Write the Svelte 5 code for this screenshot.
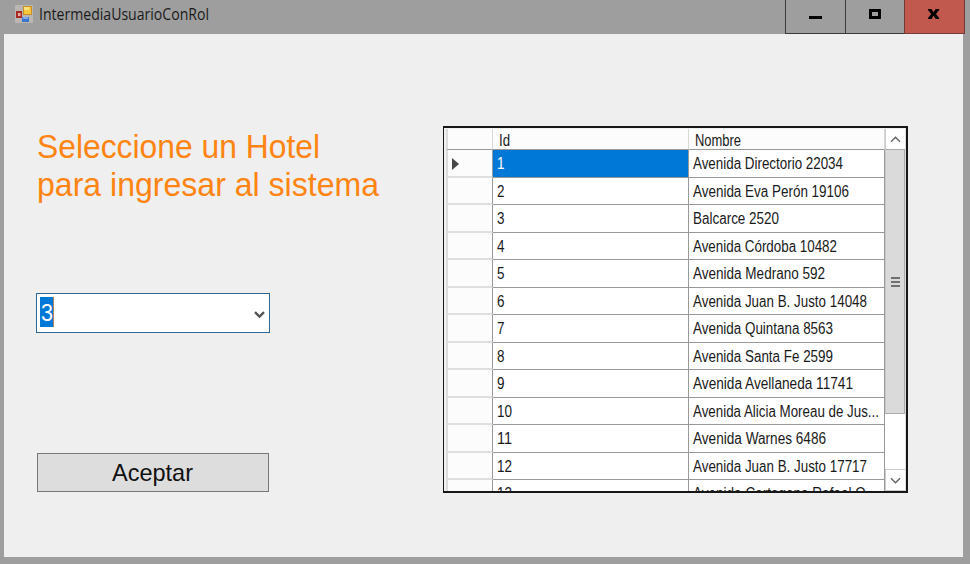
<script>
  const rows = [
    ['1', 'Avenida Directorio 22034', 150],
    ['2', 'Avenida Eva Perón 19106', 156],
    ['3', 'Balcarce 2520', 86],
    ['4', 'Avenida Córdoba 10482', 144],
    ['5', 'Avenida Medrano 592', 132],
    ['6', 'Avenida Juan B. Justo 14048', 174],
    ['7', 'Avenida Quintana 8563', 140],
    ['8', 'Avenida Santa Fe 2599', 140],
    ['9', 'Avenida Avellaneda 11741', 160],
    ['10', 'Avenida Alicia Moreau de Jus...', 186],
    ['11', 'Avenida Warnes 6486', 133],
    ['12', 'Avenida Juan B. Justo 17717', 174],
    ['13', 'Avenida Cartagena Rafael O...', 184]
  ];
</script>

{#snippet label(text, width, x, y, size)}
  <svg class="label" width="100%" height="100%">
    <text {x} {y} font-size={size} textLength={width} lengthAdjust="spacingAndGlyphs">{text}</text>
  </svg>
{/snippet}

<div class="window">
  <header>
    <svg class="logo" width="18" height="18" viewBox="0 0 18 18">
      <rect width="18" height="18" fill="#b9b6b4" />
      <rect x="8" y="1" width="9" height="9" fill="#c98a28" />
      <rect x="9" y="2" width="7" height="7" fill="#f5c83a" />
      <rect x="9" y="2" width="5" height="3" fill="#fbe27c" />
      <rect x="1" y="6" width="6" height="7" fill="#a82a24" />
      <rect x="3" y="8" width="2.5" height="3" fill="#eda8a0" />
      <rect x="7" y="12" width="7" height="5" fill="#3c74cc" />
      <rect x="8" y="12" width="5" height="2" fill="#7caaf0" />
    </svg>
    <div class="title">{@render label('IntermediaUsuarioConRol', 170, 0, 20, 15.5)}</div>
    <div class="controls">
      <div class="ctl min"><svg width="59" height="33"><rect x="23" y="16" width="13" height="3" /></svg></div>
      <div class="ctl max"><svg width="58" height="33"><path d="M23 9h12v10H23zM26 12v4h6v-4z" fill-rule="evenodd" /></svg></div>
      <div class="ctl close"><svg width="59" height="33"><path d="M23 9h3.500l2.100 3.200L30.700 9h3.500v1l-3.200 4 3.200 4v1h-3.500l-2.100-3.200L26.500 19H23v-1l3.200-4L23 10z" /></svg></div>
    </div>
  </header>

  <main>
    <section class="form">
      <div class="heading">
        <div>{@render label('Seleccione un Hotel', 283, 0, 29, 33)}</div>
        <div>{@render label('para ingresar al sistema', 342, 0, 29, 33)}</div>
      </div>
      <div class="combo">
        <span class="selected">{@render label('3', 12, 1, 24, 24)}</span>
        <svg class="chevron" width="11" height="8" viewBox="0 0 11 8"><path d="M1 1.200l4.500 4.300L10 1.200" /></svg>
      </div>
      <div class="button">{@render label('Aceptar', 81, 74, 27, 24)}</div>
    </section>

    <div class="grid">
      <div class="table">
        <div class="row head">
          <div class="mark"></div>
          <div class="id">{@render label('Id', 11, 6, 16.500, 16)}</div>
          <div class="name">{@render label('Nombre', 46, 6, 16.500, 16)}</div>
        </div>
        {#each rows as [id, name, width], i}
          <div class="row" class:current={i === 0}>
            <div class="mark">
              {#if i === 0}<svg width="8" height="12"><path d="M0 0l7 6-7 6z" fill="#484848" /></svg>{/if}
            </div>
            <div class="id">{@render label(id, id.length === 1 ? 7.5 : 15, 4, 19, 16)}</div>
            <div class="name">{@render label(name, width, 4, 19, 16)}</div>
          </div>
        {/each}
      </div>
      <div class="scroll">
        <div class="arrow up"><svg width="11" height="7" viewBox="0 0 11 7"><path d="M1 5.700L5.500 1.200 10 5.700" /></svg></div>
        <div class="thumb"><i></i><i></i><i></i></div>
        <div class="arrow down"><svg width="11" height="7" viewBox="0 0 11 7"><path d="M1 1.200l4.500 4.500L10 1.200" /></svg></div>
      </div>
    </div>
  </main>
</div>

<style>
  .window {
    box-sizing: border-box;
    width: 970px;
    height: 564px;
    padding: 0 6px 7px 4px;
    background: #9e9e9e;
    font-family: "Liberation Sans", Arial, sans-serif;
    color: #1a1a1a;
    overflow: hidden;
    display: flex;
    flex-direction: column;
  }
  svg { display: block; }
  .label { fill: currentColor; overflow: visible; }
  header { display: flex; height: 34px; flex: none; }
  .logo { margin: 5px 0 0 11px; }
  .title { width: 200px; height: 34px; margin-left: 6px; font-family: "Open Sans", "Noto Sans", sans-serif; }
  .controls { display: flex; margin-left: auto; margin-right: -1px; height: 34px; }
  .ctl { box-sizing: border-box; border-left: 1px solid #3a3a3a; border-bottom: 1px solid #3a3a3a; }
  .min { width: 60px; }
  .max { width: 59px; }
  .close { width: 61px; background: #c1594f; border-color: #713c38; border-right: 1px solid #713c38; }
  main { flex: 1; width: 959px; display: flex; background: #efefef; }
  .form { width: 439px; flex: none; }
  .heading { margin: 95px 0 0 33px; color: #ff8411; }
  .heading div { height: 38px; }
  .combo {
    box-sizing: border-box;
    display: flex;
    justify-content: space-between;
    width: 234px;
    height: 40px;
    margin: 88px 0 0 32px;
    padding: 3px 4px 0 3px;
    border: 1px solid #2e6896;
    background: #fff;
  }
  .selected { width: 14px; height: 30px; background: #0078d7; color: #fff; box-sizing: border-box; border-right: 1px solid #b78462; }
  .chevron { margin: 14px 0 0; }
  .chevron path { fill: none; stroke: #555; stroke-width: 2.4; }
  .button {
    box-sizing: border-box;
    width: 232px;
    height: 39px;
    margin: 120px 0 0 33px;
    border: 1px solid #777;
    background: #ddd;
    color: #111;
  }
  .grid {
    box-sizing: border-box;
    display: flex;
    width: 465px;
    height: 367px;
    margin-top: 92px;
    padding: 1px 1px 0 1px;
    border: 2px solid #171717;
    border-left-width: 1px;
    background: #f0f0f0;
    overflow: hidden;
  }
  .table { width: 440px; flex: none; overflow: hidden; }
  .row { display: flex; height: 27.53px; background: #fff; }
  .row > div { box-sizing: border-box; flex: none; border-right: 1px solid #999; border-bottom: 1px solid #999; }
  .row .mark { width: 47px; border-left: 2px solid #dcdcdc; border-bottom: 2px solid #dfdfdf; background: #fcfcfc; }
  .mark svg { margin: 8px 0 0 4px; }
  .row .id { width: 197px; }
  .row .name { width: 196px; }
  .row.head { height: 21px; background: #fcfcfc; }
  .row.head > div { border-right-color: #d8d8d8; }
  .row.head .mark { border-bottom: 1px solid #999; }
  .row.current .id { background: #0078d7; color: #fff; }
  .scroll { width: 21px; flex: none; display: flex; flex-direction: column; background: #fff; border-right: 1px solid #ddd; box-sizing: border-box; }
  .arrow { display: flex; align-items: center; justify-content: center; height: 20px; flex: none; border-left: 1px solid #ccc; }
  .arrow path { fill: none; stroke: #666; stroke-width: 1.5; }
  .thumb {
    box-sizing: border-box;
    height: 265px;
    border: 1px solid #aaa;
    border-left-color: #c8c8c8;
    background: #dadada;
    display: flex;
    flex-direction: column;
    align-items: center;
    justify-content: center;
    gap: 2px;
  }
  .thumb i { width: 9px; height: 2px; background: #707070; }
  .down { margin-top: auto; border-top: 1px solid #ccc; border-bottom: 1px solid #ccc; }
  .row { margin-left: 1px; width: 439px; }
  .row .mark { width: 47px; }
  .row .id { width: 196px; }
</style>
